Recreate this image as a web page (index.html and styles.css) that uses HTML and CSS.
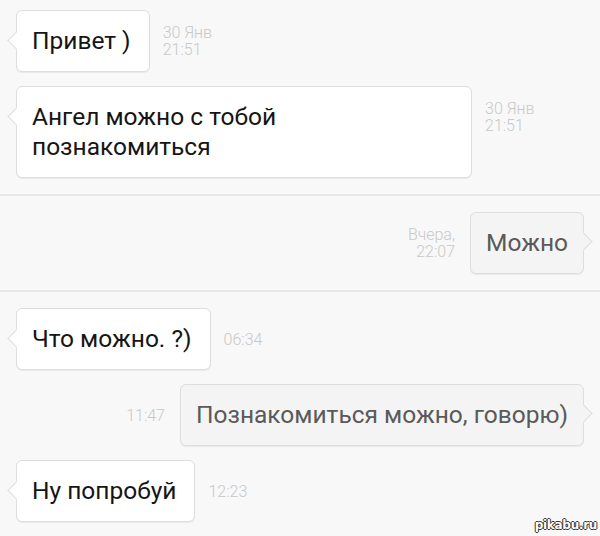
FILE: index.html
```html
<!DOCTYPE html>
<html lang="ru">
<head>
<meta charset="utf-8">
<link rel="stylesheet" href="styles.css">
</head>
<body>
<div class="chat">
  <section class="group">
    <div class="row in">
      <div class="bubble">Привет )</div>
      <div class="time top">30 Янв<br>21:51</div>
    </div>
    <div class="row in">
      <div class="bubble wide">Ангел можно с тобой<br>познакомиться</div>
      <div class="time top">30 Янв<br>21:51</div>
    </div>
  </section>
  <section class="group">
    <div class="row out">
      <div class="time right">Вчера,<br>22:07</div>
      <div class="bubble">Можно</div>
    </div>
  </section>
  <section class="group last">
    <div class="row in">
      <div class="bubble">Что можно. ?)</div>
      <div class="time">06:34</div>
    </div>
    <div class="row out">
      <div class="time">11:47</div>
      <div class="bubble">Познакомиться можно, говорю)</div>
    </div>
    <div class="row in">
      <div class="bubble">Ну попробуй</div>
      <div class="time">12:23</div>
    </div>
  </section>
  <div class="watermark">pikabu.ru</div>
</div>
</body>
</html>
```

FILE: styles.css
```css
* { box-sizing: border-box; }
html, body {
  margin: 0;
  padding: 0;
  background: #f8f8f8;
}
.chat {
  position: relative;
  width: 600px;
  height: 536px;
  overflow: hidden;
  font-family: Roboto, "Noto Sans", sans-serif;
}
.group {
  display: flex;
  flex-direction: column;
  gap: 14px;
  padding: 10px 16px 16px 16px;
  border-bottom: 2px solid #e8e8e8;
}
.group + .group { padding-top: 16px; }
.group.last { border-bottom: none; }
.row {
  display: flex;
  align-items: center;
  gap: 13px;
}
.row.out { justify-content: flex-end; gap: 15px; }
.bubble {
  position: relative;
  max-width: 456px;
  padding: 15px 18px 15px 15px;
  font-size: 24.5px;
  line-height: 30px;
  color: #151515;
  background: #fff;
  border: 1px solid #dedede;
  border-radius: 6px;
  box-shadow: 0 1px 1px rgba(0,0,0,0.06);
}
.bubble.wide { width: 456px; }
.row.in .bubble::before {
  content: "";
  position: absolute;
  left: -7px;
  top: 23px;
  width: 12px;
  height: 12px;
  background: #fff;
  border-left: 1px solid #dedede;
  border-bottom: 1px solid #dedede;
  transform: rotate(45deg);
}
.row.out .bubble {
  background: #f4f4f4;
  color: #5a5a5a;
  padding: 15px 15px 15px 15px;
}
.row.out .bubble::after {
  content: "";
  position: absolute;
  right: -7px;
  top: 22px;
  width: 12px;
  height: 12px;
  background: #f4f4f4;
  border-right: 1px solid #dedede;
  border-top: 1px solid #dedede;
  transform: rotate(45deg);
}
.time {
  font-size: 16px;
  font-weight: 300;
  line-height: 17px;
  color: #c8c8c8;
  white-space: nowrap;
}
.time.top { align-self: flex-start; margin-top: 14px; }
.time.right { text-align: right; }
.watermark {
  position: absolute;
  right: 3px;
  bottom: 4px;
  font-family: "DejaVu Sans", sans-serif;
  font-size: 12px;
  font-weight: bold;
  color: #fff;
  letter-spacing: -0.3px;
  text-shadow: -1px 0 #333, 1px 0 #333, 0 -1px #333, 0 1px #333;
}
```
